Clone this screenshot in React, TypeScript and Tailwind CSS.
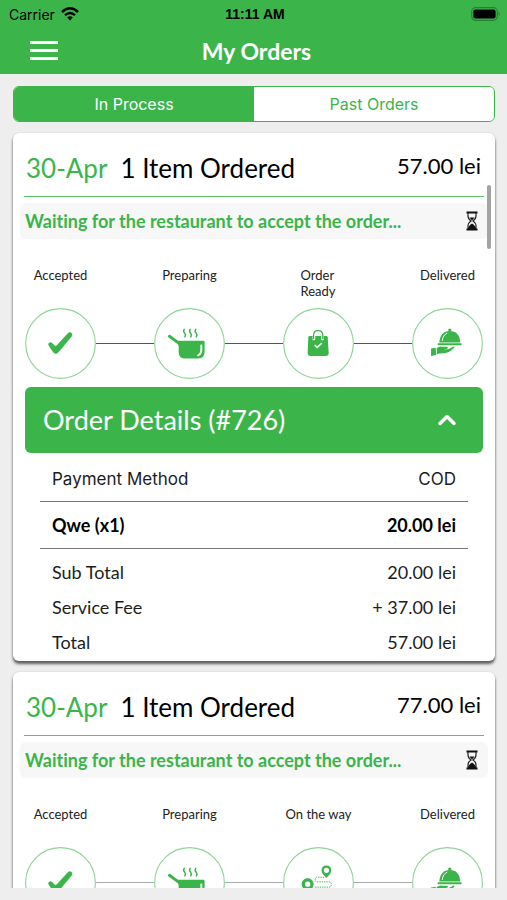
import { ChevronUp } from 'lucide-react';
import { ReactNode, useState } from 'react';

type StepIcon = 'check' | 'pot' | 'bag' | 'route' | 'cloche';

interface Step {
  label: string;
  icon: StepIcon;
}

interface Order {
  id: string;
  date: string;
  title: string;
  total: string;
  lineClass: string;
  steps: Step[];
  details?: {
    payment: string;
    items: [string, string][];
    totals: [string, string][];
  };
}

const orders: Order[] = [
  {
    id: '726',
    date: '30-Apr',
    title: '1 Item Ordered',
    total: '57.00 lei',
    lineClass: 'bg-[#555555]',
    steps: [
      { label: 'Accepted', icon: 'check' },
      { label: 'Preparing', icon: 'pot' },
      { label: 'Order Ready', icon: 'bag' },
      { label: 'Delivered', icon: 'cloche' },
    ],
    details: {
      payment: 'COD',
      items: [['Qwe (x1)', '20.00 lei']],
      totals: [
        ['Sub Total', '20.00 lei'],
        ['Service Fee', '+ 37.00 lei'],
        ['Total', '57.00 lei'],
      ],
    },
  },
  {
    id: '725',
    date: '30-Apr',
    title: '1 Item Ordered',
    total: '77.00 lei',
    lineClass: 'bg-[#aaaaaa]',
    steps: [
      { label: 'Accepted', icon: 'check' },
      { label: 'Preparing', icon: 'pot' },
      { label: 'On the way', icon: 'route' },
      { label: 'Delivered', icon: 'cloche' },
    ],
  },
];

const stepIcons: Record<StepIcon, ReactNode> = {
  check: (
    <path
      d="M78 105 Q72 105 71 111 Q77 122 87 135 Q94 143 102 134 Q122 110 142 86 Q145 79 141 76 Q136 73 131 77 L97 114 Q93 118 89 114 Q84 107 78 105 Z"
      fill="#3bb54a"
      stroke="#3bb54a"
      strokeWidth="1.5"
    />
  ),
  pot: (
    <>
      <path d="M47 86 L74 106" stroke="#3bb54a" strokeWidth="9" strokeLinecap="round" />
      <path
        d="M70 100 H150 Q154 100 154 104 V132 Q154 154 132 154 H95 Q75 154 75 134 V116 Z"
        fill="#3bb54a"
      />
      <path d="M144 114 V126 Q144 140 134 144" fill="none" stroke="#fff" strokeWidth="6" strokeLinecap="round" />
      <g fill="none" stroke="#3bb54a" strokeWidth="4.5" strokeLinecap="round">
        <path d="M92 65 Q88 71 93 76 Q98 82 94 88" />
        <path d="M110 65 Q106 71 111 76 Q116 82 112 88" />
        <path d="M127 65 Q123 71 128 76 Q133 82 129 88" />
      </g>
    </>
  ),
  bag: (
    <>
      <path
        d="M81 85 H132 Q135 85 136 89 L139 137 Q139 146 130 146 H84 Q75 146 75 137 L77 89 Q78 85 81 85 Z"
        fill="#3bb54a"
      />
      <path d="M94 98 V84 Q94 71 107 71 Q120 71 120 84 V98" fill="none" stroke="#fff" strokeWidth="8" />
      <path d="M93 94 V83 Q93 69 107 69 Q121 69 121 83 V94" fill="none" stroke="#3bb54a" strokeWidth="4" />
      <path d="M98 114 L104 120 L117 108" fill="none" stroke="#fff" strokeWidth="5" strokeLinecap="round" />
    </>
  ),
  route: (
    <>
      <path
        fillRule="evenodd"
        d="M132 56 C123 56 117 62 117 71 C117 80 124 86 132 94 C140 86 147 80 147 71 C147 62 141 56 132 56 Z M132 63 a8 8 0 1 1 0 16 a8 8 0 1 1 0 -16 Z"
        fill="#3bb54a"
      />
      <path
        fillRule="evenodd"
        d="M75 95 C65 95 57 103 57 113 C57 124 66 132 75 143 C84 132 93 124 93 113 C93 103 85 95 75 95 Z M75 105 a8 8 0 1 1 0 16 a8 8 0 1 1 0 -16 Z"
        fill="#3bb54a"
      />
      <path
        d="M125 92 H103 Q98 92 98 99 Q98 106 103 106 H140 Q147 106 147 114 Q147 122 140 122 H98"
        fill="none"
        stroke="#3bb54a"
        strokeWidth="3"
        strokeDasharray="4 3"
      />
    </>
  ),
  cloche: (
    <>
      <circle cx="115" cy="67" r="5" fill="#3bb54a" />
      <path d="M83 105 Q86 70 115 70 Q144 70 147 105 Z" fill="#3bb54a" />
      <path d="M92 99 Q94 82 106 77" fill="none" stroke="#fff" strokeWidth="3" strokeLinecap="round" />
      <rect x="78" y="107" width="73" height="6" rx="2" fill="#3bb54a" />
      <path d="M58 123 L72 121 L74 143 L58 146 Z" fill="#3bb54a" />
      <path
        d="M75 122 Q84 115 93 118 H107 Q112 120 107 124 L96 126 Q113 127 126 117 Q131 116 128 121 Q113 137 98 138 Q86 137 76 141 Z"
        fill="#3bb54a"
      />
    </>
  ),
};

function WifiGlyph() {
  return (
    <svg viewBox="0 0 18 14" className="h-[14px] w-[18px]" aria-hidden="true">
      <g fill="none" stroke="#000" strokeWidth="2.4">
        <path d="M1 5 Q9 -2.4 17 5" />
        <path d="M4 8.2 Q9 3.6 14 8.2" />
      </g>
      <path d="M6.2 10.4 Q9 8.2 11.8 10.4 L9 13.4 Z" />
    </svg>
  );
}

function BatteryGlyph() {
  return (
    <svg viewBox="0 0 30 14" className="h-[14px] w-[30px]" aria-hidden="true">
      <rect x="0.7" y="0.7" width="25.6" height="12.6" rx="4" fill="none" stroke="#278034" strokeWidth="1.2" />
      <rect x="2.4" y="2.4" width="22.2" height="9.2" rx="2" />
      <path d="M27.6 4.8 Q30 7 27.6 9.2 Z" fill="#278034" />
    </svg>
  );
}

function Hourglass() {
  return (
    <svg viewBox="0 0 12 20" className="h-5 w-3" aria-hidden="true">
      <path d="M0.5 1.5 H11.5 M0.5 18.5 H11.5" stroke="#111" strokeWidth="2" />
      <path
        d="M2 2 V5 Q2 8 5 10 Q2 12 2 15 V18 M10 2 V5 Q10 8 7 10 Q10 12 10 15 V18"
        fill="none"
        stroke="#222"
        strokeWidth="1.2"
      />
      <path d="M3.5 6.5 H8.5 L6 9.5 Z M2 18 Q2 15 6 12.5 Q10 15 10 18 Z" fill="#111" />
    </svg>
  );
}

function Progress({ steps, lineClass }: { steps: Step[]; lineClass: string }) {
  return (
    <ol className="mx-3 mt-7 flex">
      {steps.map((step, i) => (
        <li key={step.label} className={i > 0 ? 'flex flex-1 items-end' : 'flex items-end'}>
          {i > 0 && <span className={`mb-[35px] h-px flex-1 ${lineClass}`} />}
          <div className="flex w-[71px] flex-col items-center">
            <span className="flex h-[41px] justify-center text-[13px] leading-4 text-[#222222]">
              <span className={step.label === 'Order Ready' ? 'w-9' : 'whitespace-nowrap'}>{step.label}</span>
            </span>
            <svg viewBox="0 0 216 216" className="size-[71px]" aria-hidden="true">
              <circle cx="108" cy="108" r="106" fill="#fff" stroke="#8fd598" strokeWidth="3.5" />
              {stepIcons[step.icon]}
            </svg>
          </div>
        </li>
      ))}
    </ol>
  );
}

function OrderCard({ order }: { order: Order }) {
  const [open, setOpen] = useState(true);
  const { details } = order;

  return (
    <article className="rounded-md bg-white pb-px shadow-[0_3px_3px_rgba(0,0,0,0.6),0_0_2px_rgba(0,0,0,0.15)]">
      <div className="mx-[11px] flex h-16 items-center border-b border-[#5cc469] pt-[7px] pr-[3px] pl-[2px]">
        <time className="text-[26px] leading-8 text-[#3bb54a]">{order.date}</time>
        <h2 className="ml-[13px] flex-1 text-[26px] leading-8 whitespace-nowrap">{order.title}</h2>
        <span className="pb-1 text-[22px] leading-8">{order.total}</span>
      </div>

      <div className="mx-[7px] mt-[6px] flex h-9 items-center justify-between rounded-md bg-[#f7f7f7] pr-[10px] pl-[5px]">
        <p className="text-[18px] leading-6 font-bold whitespace-nowrap text-[#3bb54a]">
          Waiting for the restaurant to accept the order...
        </p>
        <Hourglass />
      </div>

      <Progress steps={order.steps} lineClass={order.lineClass} />

      {details && (
        <>
          <button
            type="button"
            aria-expanded={open}
            onClick={() => setOpen(!open)}
            className="mx-3 mt-2 flex h-[66px] w-[calc(100%-24px)] items-center justify-between rounded-md bg-[#3bb54a] pr-[22px] pl-[18px] text-[27px] text-white"
          >
            <span>Order Details (#{order.id})</span>
            <ChevronUp className={open ? 'size-7' : 'size-7 rotate-180'} strokeWidth={3} />
          </button>
          {open && (
            <dl className="mx-[27px] text-[18px] leading-[35px] text-[#1c1c1c]">
              <div className="flex justify-between border-b border-[#777777] px-3 pt-[9px] pb-1 font-[Inter,Roboto,sans-serif] text-[17px]">
                <dt>Payment Method</dt>
                <dd>{details.payment}</dd>
              </div>
              {details.items.map(([name, price]) => (
                <div
                  key={name}
                  className="flex justify-between border-b border-[#777777] px-3 pt-[6px] pb-[5px] font-bold text-black"
                >
                  <dt>{name}</dt>
                  <dd>{price}</dd>
                </div>
              ))}
              <div className="pt-[6px]">
                {details.totals.map(([name, price]) => (
                  <div key={name} className="flex justify-between px-3">
                    <dt>{name}</dt>
                    <dd>{price}</dd>
                  </div>
                ))}
              </div>
            </dl>
          )}
        </>
      )}
    </article>
  );
}

export default function App() {
  const [tab, setTab] = useState<'process' | 'past'>('process');

  const tabClass = (active: boolean) =>
    active ? 'flex-1 bg-[#3bb54a] text-white' : 'flex-1 bg-white text-[#3bb54a]';

  return (
    <div className="flex h-screen flex-col bg-[#eeeeee] pb-3 font-[Lato,sans-serif] text-black [font-variant-ligatures:none]">
      <header className="bg-[#3bb54a]">
        {/* Status bar */}
        <div className="grid h-7 grid-cols-3 items-center pr-[6px] pl-[9px] font-[Inter,Roboto,sans-serif] text-[14px]">
          <div className="flex items-center gap-[6px]">
            <span>Carrier</span>
            <WifiGlyph />
          </div>
          <span className="text-center font-['Liberation_Sans',sans-serif] font-bold">11:11 AM</span>
          <div className="flex justify-end">
            <BatteryGlyph />
          </div>
        </div>
        <div className="grid h-[46px] grid-cols-[44px_1fr_44px] items-center px-[22px]">
          <button
            type="button"
            aria-label="Menu"
            className="flex h-11 w-11 flex-col items-center justify-center gap-[5px] pb-[2px]"
          >
            <span className="h-[3px] w-7 bg-white" />
            <span className="h-[3px] w-7 bg-white" />
            <span className="h-[3px] w-7 bg-white" />
          </button>
          <h1 className="pl-[6px] text-center text-[23px] font-bold text-white">My Orders</h1>
        </div>
      </header>

      <div className="mt-3 mr-3 ml-[13px] flex h-9 shrink-0 overflow-hidden rounded-md border border-[#3bb54a] font-[Inter,Roboto,sans-serif] text-[16px]">
        <button
          type="button"
          aria-pressed={tab === 'process'}
          onClick={() => setTab('process')}
          className={tabClass(tab === 'process')}
        >
          In Process
        </button>
        <button
          type="button"
          aria-pressed={tab === 'past'}
          onClick={() => setTab('past')}
          className={tabClass(tab === 'past')}
        >
          Past Orders
        </button>
      </div>

      <main className="relative mt-2 min-h-0 flex-1 overflow-hidden">
        <div className="flex h-full flex-col gap-[11px] overflow-y-auto pt-[3px] pr-3 pl-[13px] [scrollbar-width:none]">
          {orders.map(order => (
            <OrderCard key={order.id} order={order} />
          ))}
        </div>
        {/* Scroll indicator */}
        <span className="absolute top-[55px] right-4 h-16 w-1 rounded-full bg-[#a3a3a3]" />
      </main>
    </div>
  );
}
